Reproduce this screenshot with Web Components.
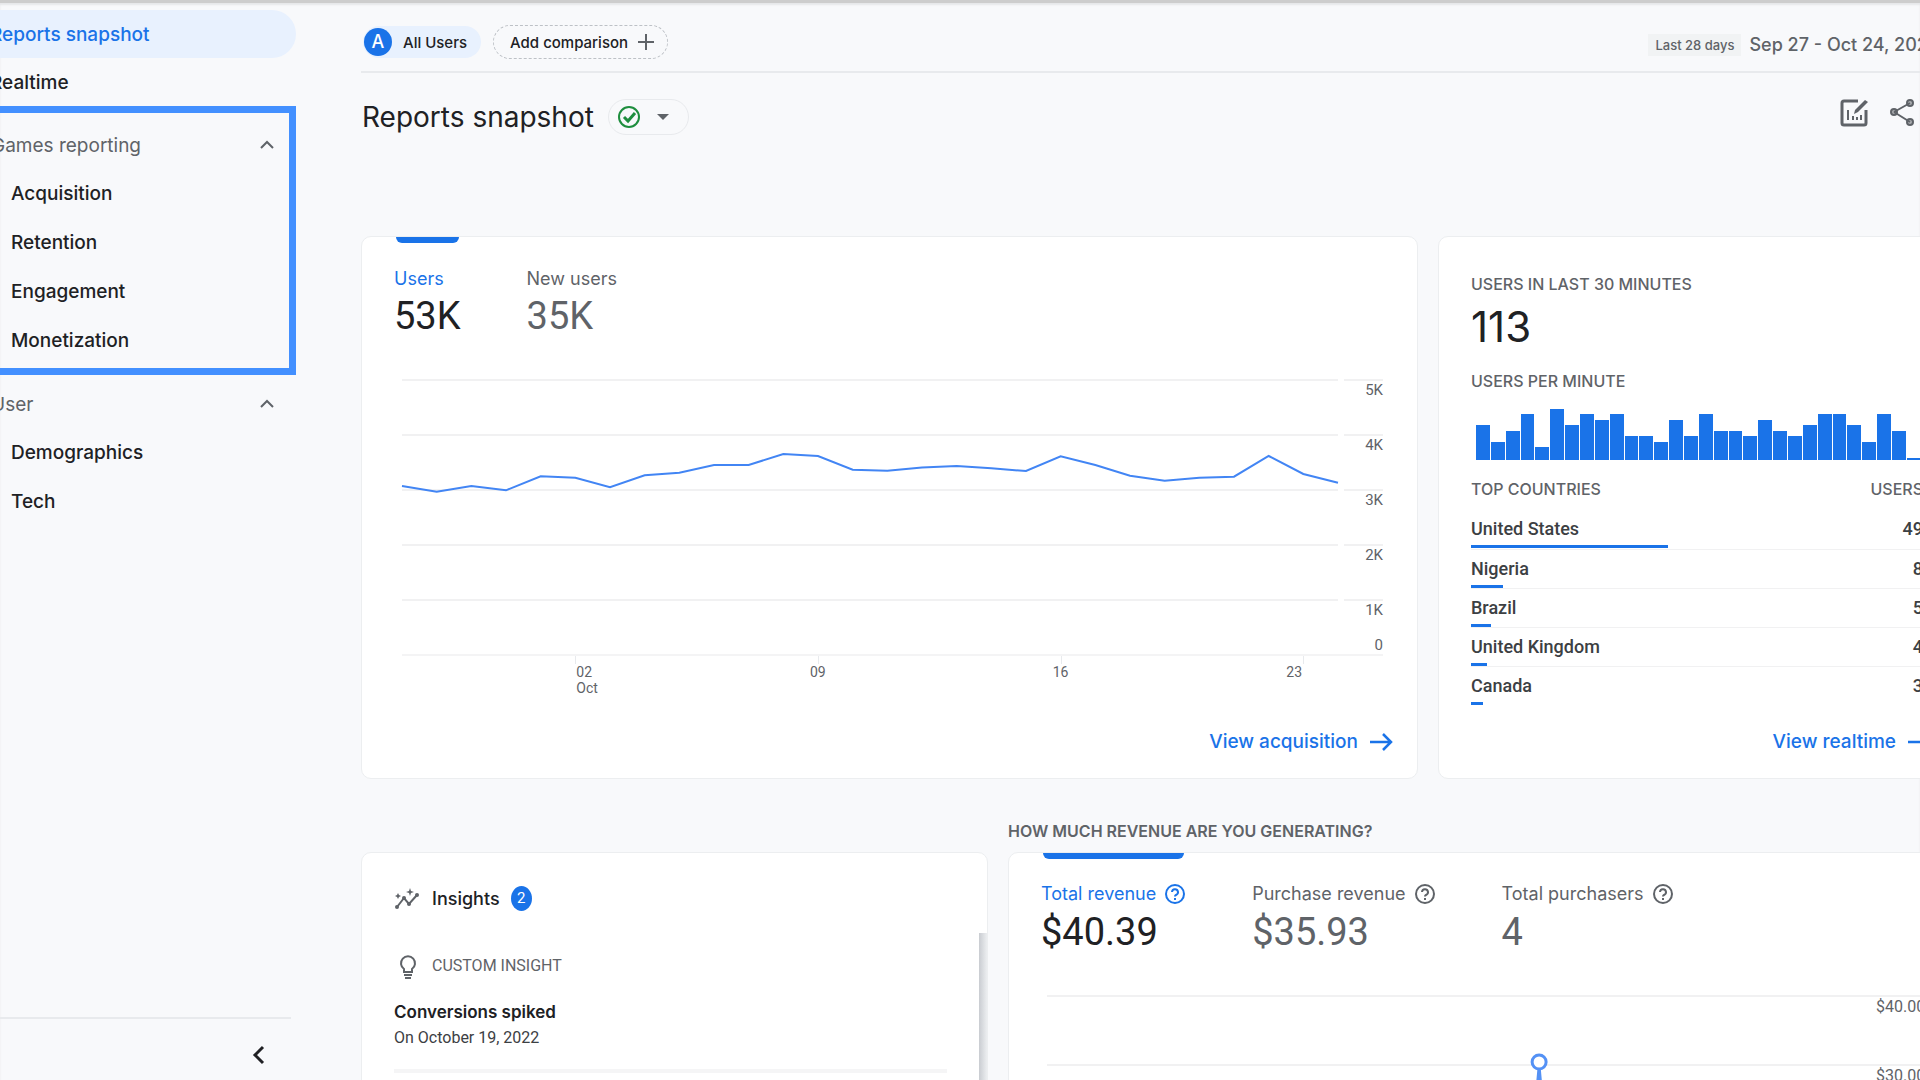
<!DOCTYPE html>
<html lang="en">
<head>
<meta charset="utf-8">
<title>Reports snapshot</title>
<style>
  :root {
    --blue: #1a73e8;
    --line-blue: #4285f4;
    --ink: #202124;
    --muted: #5f6368;
    --rule: #e8eaed;
    --surface: #f8f9fb;
  }
  body {
    margin: 0;
    background: var(--surface);
    color: var(--ink);
    font-family: Inter, Roboto, "Liberation Sans", sans-serif;
    font-size: 16px;
  }
</style>
</head>
<body>
<app-shell>
  <side-nav slot="nav">
    <nav-link active>Reports snapshot</nav-link>
    <nav-link>Realtime</nav-link>
    <nav-group label="Games reporting" highlighted>
      <nav-link nested>Acquisition</nav-link>
      <nav-link nested>Retention</nav-link>
      <nav-link nested>Engagement</nav-link>
      <nav-link nested>Monetization</nav-link>
    </nav-group>
    <nav-group label="User">
      <nav-link nested>Demographics</nav-link>
      <nav-link nested>Tech</nav-link>
    </nav-group>
  </side-nav>

  <comparison-bar range="Last 28 days">Sep 27 - Oct 24, 2022</comparison-bar>
  <report-title>Reports snapshot</report-title>

  <card-row kind="overview">
    <report-card>
      <metric-tabs slot="tabs">
        <metric-tab label="Users" value="53K" active></metric-tab>
        <metric-tab label="New users" value="35K"></metric-tab>
      </metric-tabs>
      <trend-chart></trend-chart>
      <arrow-link slot="footer">View acquisition</arrow-link>
    </report-card>
    <report-card>
      <realtime-panel count="113"></realtime-panel>
      <arrow-link slot="footer">View realtime</arrow-link>
    </report-card>
  </card-row>

  <card-row kind="details">
    <report-card unlabelled>
      <insights-list count="2"></insights-list>
    </report-card>
    <report-card heading="How much revenue are you generating?">
      <metric-tabs slot="tabs">
        <metric-tab label="Total revenue" value="$40.39" active help></metric-tab>
        <metric-tab label="Purchase revenue" value="$35.93" help></metric-tab>
        <metric-tab label="Total purchasers" value="4" help></metric-tab>
      </metric-tabs>
      <revenue-chart></revenue-chart>
    </report-card>
  </card-row>
</app-shell>

<script>
class BaseElement extends HTMLElement {
  constructor() {
    super();
    this.attachShadow({ mode: 'open' });
  }

  connectedCallback() {
    this.shadowRoot.innerHTML = this.render();
  }
}

class AppShell extends BaseElement {
  render() {
    return `
      <style>
        :host {
          display: flex;
          height: 100vh;
          overflow: hidden;
          box-sizing: border-box;
          border-top: 3px solid #cdcdcd;
          box-shadow: inset 0 2px 2px #e6e7e9;
        }
        main {
          flex: 1;
          min-width: 0;
          margin: 0 -36px 0 65px;
        }
      </style>
      <slot name="nav"></slot>
      <main><slot></slot></main>
    `;
  }
}

class SideNav extends BaseElement {
  render() {
    return `
      <style>
        :host {
          display: flex;
          flex-direction: column;
          flex: none;
          width: 296px;
          padding-top: 7px;
          box-sizing: border-box;
        }
        nav { flex: 1; }
        footer {
          display: flex;
          justify-content: flex-end;
          margin-right: 5px;
          padding: 24px 20px 13px;
          border-top: 2px solid var(--rule);
        }
        button {
          display: flex;
          padding: 0;
          border: 0;
          background: none;
          color: var(--ink);
        }
      </style>
      <nav aria-label="Reports"><slot></slot></nav>
      <footer>
        <button aria-label="Collapse navigation">
          <svg width="24" height="24" viewBox="0 0 24 24" fill="none" stroke="currentColor" stroke-width="3"><path d="M16 4l-8 8 8 8"/></svg>
        </button>
      </footer>
    `;
  }
}

class NavLink extends BaseElement {
  render() {
    return `
      <style>
        :host { display: block; }
        a {
          display: flex;
          align-items: center;
          height: 48px;
          margin-left: -40px;
          padding-left: 30px;
          border-radius: 0 24px 24px 0;
          color: var(--ink);
          font-size: 19px;
          font-weight: 500;
          text-decoration: none;
          white-space: nowrap;
        }
        :host([active]) a {
          background: #e8f1fe;
          color: var(--blue);
        }
        :host([nested]) a {
          height: 49px;
          padding-left: 51px;
        }
      </style>
      <a href="#"><slot></slot></a>
    `;
  }
}

class NavGroup extends BaseElement {
  render() {
    return `
      <style>
        :host {
          display: block;
          padding-top: 5px;
        }
        :host([highlighted]) {
          margin-left: -12px;
          padding: 8px 0 3px 5px;
          border: 7px solid #4390ff;
        }
        button {
          display: flex;
          align-items: center;
          justify-content: space-between;
          box-sizing: border-box;
          width: calc(100% + 9px);
          height: 48px;
          margin-left: -9px;
          padding: 0 21px 0 0;
          border: 0;
          background: none;
          color: var(--muted);
          font: inherit;
          font-size: 19px;
        }
        :host([highlighted]) button { padding-right: 14px; }
      </style>
      <button aria-expanded="true">
        ${this.getAttribute('label')}
        <svg width="16" height="16" viewBox="0 0 16 16" fill="none" stroke="currentColor" stroke-width="2"><path d="M2 11l6-6 6 6"/></svg>
      </button>
      <slot></slot>
    `;
  }
}

class ComparisonBar extends BaseElement {
  render() {
    return `
      <style>
        :host {
          display: flex;
          align-items: center;
          gap: 12px;
          height: 70px;
          box-sizing: border-box;
          padding: 10px 0 0 2px;
          border-bottom: 2px solid var(--rule);
          font-weight: 500;
          white-space: nowrap;
        }
        button {
          display: flex;
          align-items: center;
          height: 34px;
          box-sizing: border-box;
          margin: 0;
          border: 0;
          border-radius: 17px;
          background: none;
          color: var(--ink);
          font: inherit;
          font-size: 15px;
        }
        .all {
          gap: 11px;
          height: 32px;
          padding: 0 14px 0 1px;
          background: #e8f1fe;
        }
        .avatar {
          width: 28px;
          border-radius: 50%;
          background: var(--blue);
          color: #fff;
          font-size: 18px;
          line-height: 28px;
        }
        .add {
          gap: 9px;
          padding: 0 12px 0 16px;
          border: 1px dashed #bdc1c6;
        }
        .add svg { color: var(--muted); }
        .dates {
          gap: 8px;
          margin-left: auto;
          padding: 5px 17px 0 0;
          color: var(--muted);
          font-size: 18px;
        }
        .range {
          padding: 0 7px;
          background: #f1f3f4;
          font-size: 13px;
          line-height: 22px;
        }
      </style>
      <button class="all"><span class="avatar">A</span>All Users</button>
      <button class="add">Add comparison
        <svg width="18" height="18" viewBox="0 0 18 18" fill="none" stroke="currentColor" stroke-width="2"><path d="M9 1v16M1 9h16"/></svg>
      </button>
      <button class="dates">
        <span class="range">${this.getAttribute('range')}</span>
        <slot></slot>
      </button>
    `;
  }
}

class ReportTitle extends BaseElement {
  render() {
    return `
      <style>
        :host {
          display: flex;
          align-items: center;
          height: 88px;
          margin-bottom: 75px;
        }
        h1 {
          margin: 0 14px 0 1px;
          font-size: 28px;
          font-weight: 400;
          white-space: nowrap;
        }
        button {
          display: flex;
          align-items: center;
          padding: 0;
          border: 0;
          background: none;
          color: var(--muted);
        }
        .status {
          gap: 12px;
          height: 36px;
          padding: 0 15px 0 8px;
          border: 1px solid var(--rule);
          border-radius: 18px;
        }
        .tools {
          display: flex;
          gap: 16px;
          margin: 0 37px 10px auto;
        }
      </style>
      <h1><slot></slot></h1>
      <button class="status" aria-label="Data quality">
        <svg width="24" height="24" viewBox="0 0 24 24" fill="none" stroke="#1e8e3e" stroke-width="2"><circle cx="12" cy="12" r="10"/><path d="M7 12l4 4 7-8" stroke-width="3"/></svg>
        <svg width="20" height="20" viewBox="0 0 20 20" fill="currentColor"><path d="M4 7h12l-6 6z"/></svg>
      </button>
      <div class="tools">
        <button aria-label="Customize report">
          <svg width="33" height="33" viewBox="0 0 33 33" fill="none" stroke="currentColor">
            <path d="M21 5H7q-2 0-2 2v20q0 2 2 2h20q2 0 2-2V14" stroke-width="3"/>
            <path d="M11 14v10M16 20v4M20 21v3M24 19v5" stroke-width="2"/>
            <path d="M17 18l1-4L28 4l3 2-10 10z" fill="currentColor" stroke="none"/>
          </svg>
        </button>
        <button aria-label="Share report">
          <svg width="33" height="33" viewBox="0 0 33 33" fill="none" stroke="currentColor" stroke-width="2">
            <path d="M8 16l16-9M8 16l16 10"/>
            <g fill="currentColor" fill-opacity=".5"><circle cx="8" cy="16" r="3"/><circle cx="24" cy="7" r="3"/><circle cx="24" cy="26" r="3"/></g>
          </svg>
        </button>
      </div>
    `;
  }
}

class CardRow extends BaseElement {
  render() {
    return `
      <style>
        :host {
          display: grid;
          gap: 20px;
        }
        :host([kind=overview]) {
          grid-template-columns: minmax(0, 1057fr) minmax(0, 518fr);
        }
        :host([kind=details]) {
          grid-template-columns: minmax(0, 627fr) minmax(0, 948fr);
          margin-top: 41px;
        }
      </style>
      <slot></slot>
    `;
  }
}

class ReportCard extends BaseElement {
  render() {
    const heading = this.getAttribute('heading');
    return `
      <style>
        :host {
          display: flex;
          flex-direction: column;
        }
        /* keeps the card level with a neighbour that has a heading */
        :host([unlabelled]) { padding-top: 32px; }
        h2 {
          margin: 0 0 10px;
          color: var(--muted);
          font-size: 16px;
          font-weight: 600;
          line-height: 22px;
          text-transform: uppercase;
        }
        section {
          display: flex;
          flex-direction: column;
          flex: 1;
          border: 1px solid #eceef0;
          border-radius: 10px;
          background: #fff;
        }
        .footer {
          display: flex;
          justify-content: flex-end;
          margin-top: auto;
          padding-right: 24px;
        }
      </style>
      ${heading ? `<h2>${heading}</h2>` : ''}
      <section>
        <slot name="tabs"></slot>
        <slot></slot>
        <div class="footer"><slot name="footer"></slot></div>
      </section>
    `;
  }
}

class MetricTabs extends BaseElement {
  render() {
    return `
      <style>
        :host {
          display: flex;
          gap: 66px;
          padding: 0 32px;
        }
      </style>
      <slot></slot>
    `;
  }
}

class MetricTab extends BaseElement {
  render() {
    const help = `
      <svg width="22" height="22" viewBox="0 0 22 22" fill="none" stroke="currentColor" stroke-width="2">
        <circle cx="11" cy="11" r="9"/>
        <path d="M8 9a3 3 0 1 1 4 3q-1 .5-1 1.500M11 15v2"/>
      </svg>`;
    return `
      <style>
        :host { display: block; }
        button {
          display: flex;
          flex-direction: column;
          padding: 0;
          border: 0;
          background: none;
          color: var(--muted);
          font: inherit;
          text-align: left;
          white-space: nowrap;
        }
        .bar {
          align-self: stretch;
          height: 6px;
          margin: 0 2px;
          border-radius: 0 0 6px 6px;
        }
        .label {
          display: flex;
          align-items: center;
          gap: 8px;
          height: 24px;
          margin-top: 23px;
          font-size: 18px;
        }
        .value {
          font-family: Roboto, sans-serif;
          font-size: 38px;
          line-height: 52px;
        }
        :host([active]) .bar { background: var(--blue); }
        :host([active]) .label { color: var(--blue); }
        :host([active]) .value { color: var(--ink); }
      </style>
      <button aria-pressed="${this.hasAttribute('active')}">
        <span class="bar"></span>
        <span class="label">${this.getAttribute('label')}${this.hasAttribute('help') ? help : ''}</span>
        <span class="value">${this.getAttribute('value')}</span>
      </button>
    `;
  }
}

class TrendChart extends BaseElement {
  render() {
    // daily users, Sep 27 to Oct 24
    const users = [
      3054, 2951, 3054, 2976, 3231, 3205, 3031, 3249, 3296, 3436, 3436, 3636, 3600, 3351,
      3333, 3391, 3418, 3376, 3327, 3595, 3436, 3242, 3151, 3205, 3224, 3600, 3273, 3115
    ];
    const points = users.map((value, day) => `${day},${5000 - value}`).join(' ');
    return `
      <style>
        :host {
          display: block;
          margin: 37px 34px 0 40px;
          color: var(--muted);
          font-family: Roboto, sans-serif;
          font-size: 15px;
        }
        .plot {
          position: relative;
          display: grid;
          grid-template-columns: 1fr 39px;
          grid-auto-rows: 55px;
          column-gap: 6px;
        }
        .plot div { border-top: 2px solid #f1f1f2; }
        .tick {
          line-height: 18px;
          text-align: right;
        }
        .last {
          display: flex;
          flex-direction: column;
          justify-content: space-between;
        }
        svg {
          position: absolute;
          top: 0;
          left: 0;
          width: calc(100% - 45px);
          height: 100%;
          overflow: visible;
        }
        .days {
          display: grid;
          grid-template-columns: repeat(27, minmax(0, 1fr)) 45px;
          border-top: 2px solid #f4f4f5;
          font-size: 14px;
          line-height: 16px;
        }
        .days span {
          border-left: 1px solid var(--rule);
          height: 8px;
        }
        .days b {
          display: block;
          width: 30px;
          padding-top: 8px;
          font-weight: 400;
        }
        .days .mid b { margin-left: -9px; }
        .days .end b { margin-left: -18px; }
      </style>
      <div class="plot">
        <div></div><div class="tick">5K</div>
        <div></div><div class="tick">4K</div>
        <div></div><div class="tick">3K</div>
        <div></div><div class="tick">2K</div>
        <div></div><div class="tick last"><span>1K</span><span>0</span></div>
        <svg viewBox="0 0 27 5000" preserveAspectRatio="none" fill="none" stroke="var(--line-blue)" aria-hidden="true">
          <polyline points="${points}" stroke-width="2" vector-effect="non-scaling-stroke"/>
        </svg>
      </div>
      <div class="days">
        <span style="grid-column: 6"><b>02<br>Oct</b></span>
        <span class="mid" style="grid-column: 13"><b>09</b></span>
        <span class="mid" style="grid-column: 20"><b>16</b></span>
        <span class="end" style="grid-column: 27"><b>23</b></span>
      </div>
    `;
  }
}

class ArrowLink extends BaseElement {
  render() {
    return `
      <style>
        :host { display: block; }
        a {
          display: flex;
          align-items: center;
          gap: 11px;
          height: 72px;
          color: var(--blue);
          font-size: 19px;
          font-weight: 500;
          text-decoration: none;
          white-space: nowrap;
        }
      </style>
      <a href="#"><slot></slot>
        <svg width="24" height="20" viewBox="0 0 24 20" fill="none" stroke="currentColor" stroke-width="2.500"><path d="M1 10h21M14 2l8 8-8 8"/></svg>
      </a>
    `;
  }
}

class RealtimePanel extends BaseElement {
  render() {
    const minutes = [6, 3, 5, 8, 2, 9, 6, 8, 7, 8, 4, 4, 3, 7, 4, 8, 5, 5, 4, 7, 5, 4, 6, 8, 8, 6, 3, 8, 5, 0];
    const countries = [
      ['United States', 49, 197],
      ['Nigeria', 8, 32],
      ['Brazil', 5, 20],
      ['United Kingdom', 4, 16],
      ['Canada', 3, 12]
    ];
    return `
      <style>
        :host {
          display: block;
          padding: 36px 32px 0;
        }
        h3, th {
          margin: 0;
          color: var(--muted);
          font-family: Inter, sans-serif;
          font-size: 16px;
          font-weight: 500;
          line-height: 22px;
          text-transform: uppercase;
        }
        .count {
          margin: 0 0 11px;
          font-size: 42px;
          line-height: 64px;
        }
        .bars {
          display: flex;
          align-items: flex-end;
          gap: 1px;
          height: 50px;
          margin: 18px 2px 18px 5px;
        }
        .bars i {
          flex: 1;
          background: var(--blue);
        }
        table {
          width: 100%;
          border-collapse: collapse;
          font-family: Roboto, sans-serif;
          font-size: 18px;
        }
        th, td {
          padding: 0;
          text-align: left;
        }
        thead tr { height: 32px; vertical-align: top; }
        td {
          height: 39px;
          box-sizing: border-box;
          border-bottom: 1px solid #f1f1f2;
          color: #3c4043;
          font-weight: 500;
        }
        tr:last-child td { border-bottom-color: transparent; }
        td span {
          display: block;
          padding: 8px 0 6px;
          line-height: 21px;
        }
        td i {
          display: block;
          height: 3px;
          background: var(--blue);
        }
        th:last-child, td:last-child { text-align: right; }
        td:last-child span { padding-bottom: 9px; }
      </style>
      <h3>Users in last 30 minutes</h3>
      <p class="count">${this.getAttribute('count')}</p>
      <h3>Users per minute</h3>
      <div class="bars">
        ${minutes.map(n => `<i style="height: ${n * 11 + 4}%"></i>`).join('')}
      </div>
      <table>
        <thead><tr><th>Top countries</th><th>Users</th></tr></thead>
        <tbody>
          ${countries.map(([name, users, width]) => `
            <tr><td><span>${name}</span><i style="width: ${width}px"></i></td><td><span>${users}</span></td></tr>
          `).join('')}
        </tbody>
      </table>
    `;
  }
}

class InsightsList extends BaseElement {
  render() {
    return `
      <style>
        :host { display: block; }
        header {
          display: flex;
          align-items: center;
          gap: 11px;
          height: 80px;
          padding: 12px 0 0 32px;
          box-sizing: border-box;
          font-size: 18px;
          font-weight: 500;
        }
        svg { color: var(--muted); }
        .badge {
          width: 21px;
          border-radius: 50%;
          background: var(--blue);
          color: #fff;
          font-family: Roboto, sans-serif;
          font-size: 15px;
          font-weight: 400;
          line-height: 25px;
          text-align: center;
        }
        .scroller {
          display: flex;
          height: 240px;
        }
        article {
          flex: 1;
          height: 136px;
          margin: 0 32px;
          border-bottom: 4px solid #f5f5f6;
          font-family: Roboto, sans-serif;
        }
        .kind {
          display: flex;
          align-items: center;
          gap: 11px;
          height: 26px;
          margin: 20px 0 21px;
          color: var(--muted);
          font-size: 16px;
          text-transform: uppercase;
        }
        h3 {
          margin: 0;
          font-family: Inter, sans-serif;
          font-size: 17px;
          font-weight: 600;
          line-height: 24px;
        }
        p {
          margin: 0;
          color: #3c4043;
          font-size: 16px;
          line-height: 28px;
        }
        .thumb {
          width: 8px;
          background: linear-gradient(to right, #c9ccd1, #eceef0);
        }
      </style>
      <header>
        <svg width="27" height="24" viewBox="0 0 27 24" fill="none" stroke="currentColor" stroke-width="2">
          <path d="M3 20l7-9 5 6 8-9"/>
          <g fill="currentColor" stroke="none">
            <circle cx="3" cy="20" r="2"/><circle cx="10" cy="11" r="2"/><circle cx="15" cy="17" r="2"/><circle cx="23" cy="8" r="2"/>
            <path d="M16 1l1 3 3 1-3 1-1 3-1-3-3-1 3-1zM4 6l1 2 2 1-2 1-1 2-1-2-2-1 2-1z"/>
          </g>
        </svg>
        Insights <span class="badge">${this.getAttribute('count')}</span>
      </header>
      <div class="scroller">
        <article>
          <div class="kind">
            <svg width="27" height="26" viewBox="0 0 27 26" fill="none" stroke="currentColor" stroke-width="2">
              <path d="M10 19v-3a7 7 0 1 1 8 0v3zM10 22h8M11 25h6"/>
            </svg>
            Custom insight
          </div>
          <h3>Conversions spiked</h3>
          <p>On October 19, 2022</p>
        </article>
        <div class="thumb"></div>
      </div>
    `;
  }
}

class RevenueChart extends BaseElement {
  render() {
    return `
      <style>
        :host {
          display: block;
          margin: 37px 31px 0 38px;
          color: var(--muted);
          font-family: Roboto, sans-serif;
          font-size: 16px;
        }
        .plot {
          position: relative;
          display: grid;
          grid-template-columns: 1fr 48px;
          grid-auto-rows: 69px;
        }
        .plot div { border-top: 2px solid #f1f1f2; }
        .tick {
          line-height: 19px;
          text-align: right;
        }
        svg {
          position: absolute;
          top: 0;
          left: 0;
          width: calc(100% - 48px);
          height: 100%;
          overflow: visible;
        }
      </style>
      <div class="plot">
        <div></div><div class="tick">$40.00</div>
        <div></div><div class="tick">$30.00</div>
        <svg aria-hidden="true">
          <svg x="59%" overflow="visible" fill="#fff" stroke="#5491f5" stroke-width="3">
            <path d="M-3 138L3 72l6 66" fill="none"/>
            <circle cx="3" cy="67" r="7"/>
          </svg>
        </svg>
      </div>
    `;
  }
}

customElements.define('app-shell', AppShell);
customElements.define('side-nav', SideNav);
customElements.define('nav-link', NavLink);
customElements.define('nav-group', NavGroup);
customElements.define('comparison-bar', ComparisonBar);
customElements.define('report-title', ReportTitle);
customElements.define('card-row', CardRow);
customElements.define('report-card', ReportCard);
customElements.define('metric-tabs', MetricTabs);
customElements.define('metric-tab', MetricTab);
customElements.define('trend-chart', TrendChart);
customElements.define('arrow-link', ArrowLink);
customElements.define('realtime-panel', RealtimePanel);
customElements.define('insights-list', InsightsList);
customElements.define('revenue-chart', RevenueChart);
</script>
</body>
</html>
